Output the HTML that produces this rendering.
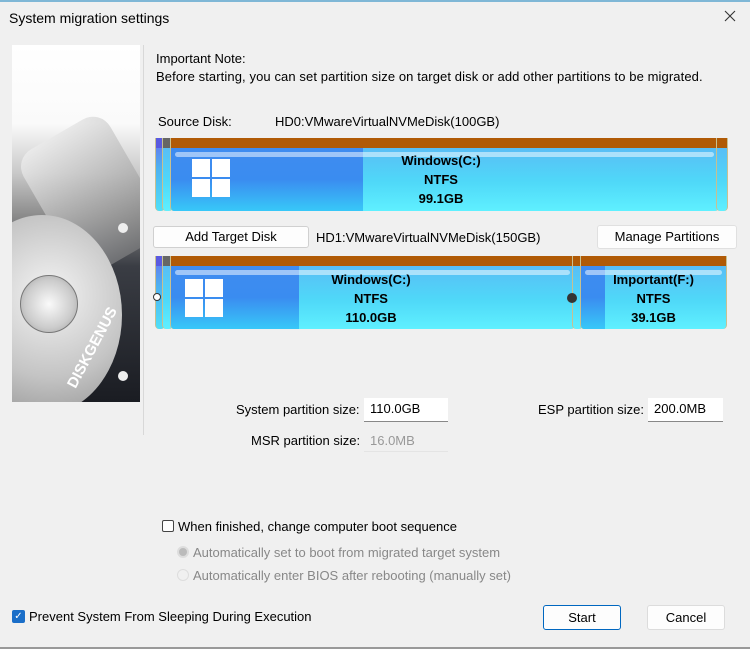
<!DOCTYPE html>
<html><head><style>
body{margin:0;width:750px;height:649px;background:#f0f0f0;font-family:"Liberation Sans",sans-serif;font-size:13px;color:#000;position:relative;overflow:hidden}
.a{position:absolute;white-space:nowrap}
.part{position:absolute;top:0;bottom:0;border-left:1px solid #c8c090;border-right:1px solid #c8c090;border-radius:0 0 4px 4px;overflow:hidden;background:linear-gradient(#5cb6f5,#4fd8f8 60%,#5ff0ff)}
.part .top{position:absolute;left:0;right:0;top:0;height:10px;background:#b05a06}
.part .dk{position:absolute;top:10px;bottom:0;left:0;background:linear-gradient(#3f8cf0,#3a8cf0 50%,#38c8f8)}
.part .hl{position:absolute;top:14px;left:4px;right:4px;height:5px;background:rgba(255,255,255,.5);border-radius:3px}
.lbl{position:absolute;font-weight:bold;text-align:center;line-height:19px;font-size:13px}
.btn{position:absolute;background:#fdfdfd;border:1px solid #d0d0d0;box-sizing:border-box;text-align:center;border-radius:3px}
.inp{position:absolute;background:#fff;border-bottom:1px solid #888;box-sizing:border-box;padding-left:6px;line-height:22px}
.win{position:absolute;width:38px;height:38px}
.win i{position:absolute;width:18px;height:18px;background:#fff}
</style></head><body>
<div class="a" style="left:0;top:0;width:750px;height:2px;background:#7fb7d6"></div>
<div class="a" style="left:9px;top:10px;font-size:14px">System migration settings</div>
<svg class="a" style="left:724px;top:10px" width="12" height="12"><path d="M1 1L11 11M11 1L1 11" stroke="#333" stroke-width="1.1"/></svg>

<div class="a" style="left:12px;top:45px;width:128px;height:357px;background:linear-gradient(#fff 0%,#fafafa 22%,#c8c8c8 36%,#8a8a8a 48%,#3a3d44 62%,#1a1c22 100%);overflow:hidden">
 <div class="a" style="left:30px;top:80px;width:100px;height:140px;background:linear-gradient(135deg,rgba(255,255,255,.5),rgba(120,120,120,.5));transform:rotate(-30deg);border-radius:20px"></div>
 <div class="a" style="left:-50px;top:170px;width:160px;height:200px;border-radius:50%;background:radial-gradient(circle at 55% 40%,#f4f4f4,#c4c4c4 55%,#8a8a8a)"></div>
 <div class="a" style="left:8px;top:230px;width:56px;height:56px;border-radius:50%;background:radial-gradient(#fafafa,#ccc 60%,#999);border:1px solid #777"></div>
 <div class="a" style="left:52px;top:338px;color:#fff;font-weight:bold;font-size:15px;transform:rotate(-62deg);transform-origin:left top">DISKGENUS</div>
 <div class="a" style="left:106px;top:178px;width:10px;height:10px;border-radius:50%;background:#eee"></div>
 <div class="a" style="left:106px;top:326px;width:10px;height:10px;border-radius:50%;background:#eee"></div>
</div>
<div class="a" style="left:143px;top:45px;width:1px;height:390px;background:#d8d8d8"></div>

<div class="a" style="left:156px;top:51px">Important Note:</div>
<div class="a" style="left:156px;top:69px;letter-spacing:0.1px">Before starting, you can set partition size on target disk or add other partitions to be migrated.</div>
<div class="a" style="left:158px;top:114px">Source Disk:</div>
<div class="a" style="left:275px;top:114px">HD0:VMwareVirtualNVMeDisk(100GB)</div>

<div class="a" style="left:155px;top:138px;width:571px;height:73px">
 <div class="part" style="left:0;width:8px;background:linear-gradient(#6a6ef0,#4fb0f0 40%,#50e0f8)"><div class="top" style="background:#5a5ae0"></div></div>
 <div class="part" style="left:7px;width:9px"><div class="top" style="background:#666"></div></div>
 <div class="part" style="left:15px;width:547px"><div class="dk" style="width:192px"></div><div class="top"></div><div class="hl"></div>
  <div class="win" style="left:21px;top:21px"><i style="left:0;top:0"></i><i style="left:20px;top:0"></i><i style="left:0;top:20px"></i><i style="left:20px;top:20px"></i></div>
  <div class="lbl" style="left:200px;width:140px;top:13px">Windows(C:)<br>NTFS<br>99.1GB</div></div>
 <div class="part" style="left:561px;width:10px"><div class="top"></div></div>
</div>

<div class="btn" style="left:153px;top:226px;width:156px;height:22px;line-height:20px">Add Target Disk</div>
<div class="a" style="left:316px;top:230px">HD1:VMwareVirtualNVMeDisk(150GB)</div>
<div class="btn" style="left:597px;top:225px;width:140px;height:24px;line-height:22px;border-color:#e0e0e0">Manage Partitions</div>

<div class="a" style="left:155px;top:256px;width:570px;height:73px">
 <div class="part" style="left:0;width:8px;background:linear-gradient(#6a6ef0,#4fb0f0 40%,#50e0f8)"><div class="top" style="background:#5a5ae0"></div></div>
 <div class="part" style="left:7px;width:9px"><div class="top" style="background:#666"></div></div>
 <div class="part" style="left:15px;width:403px"><div class="dk" style="width:128px"></div><div class="top"></div><div class="hl"></div>
  <div class="win" style="left:14px;top:23px"><i style="left:0;top:0"></i><i style="left:20px;top:0"></i><i style="left:0;top:20px"></i><i style="left:20px;top:20px"></i></div>
  <div class="lbl" style="left:130px;width:140px;top:14px">Windows(C:)<br>NTFS<br>110.0GB</div></div>
 <div class="part" style="left:417px;width:9px"><div class="top"></div></div>
 <div class="part" style="left:425px;width:145px"><div class="dk" style="width:24px"></div><div class="top"></div><div class="hl"></div>
  <div class="lbl" style="left:0;width:145px;top:14px">Important(F:)<br>NTFS<br>39.1GB</div></div>
 <div class="a" style="left:-2px;top:37px;width:8px;height:8px;border-radius:50%;background:#fff;border:1px solid #333;box-sizing:border-box"></div>
 <div class="a" style="left:412px;top:37px;width:10px;height:10px;border-radius:50%;background:#333"></div>
</div>

<div class="a" style="left:236px;top:402px">System partition size:</div>
<div class="inp" style="left:364px;top:398px;width:84px;height:24px">110.0GB</div>
<div class="a" style="left:538px;top:402px">ESP partition size:</div>
<div class="inp" style="left:648px;top:398px;width:75px;height:24px">200.0MB</div>
<div class="a" style="left:251px;top:433px">MSR partition size:</div>
<div class="a" style="left:370px;top:433px;color:#999">16.0MB</div>
<div class="a" style="left:364px;top:451px;width:84px;height:1px;background:#e4e4e4"></div>

<div class="a" style="left:162px;top:520px;width:12px;height:12px;border:1px solid #444;box-sizing:border-box;background:#fff;border-radius:2px"></div>
<div class="a" style="left:178px;top:519px">When finished, change computer boot sequence</div>
<div class="a" style="left:177px;top:546px;width:12px;height:12px;border-radius:50%;background:#bbb;border:2px solid #ddd;box-sizing:border-box"></div>
<div class="a" style="left:193px;top:545px;color:#888">Automatically set to boot from migrated target system</div>
<div class="a" style="left:177px;top:569px;width:12px;height:12px;border-radius:50%;background:#f0f0f0;border:1px solid #ddd;box-sizing:border-box"></div>
<div class="a" style="left:193px;top:568px;color:#888">Automatically enter BIOS after rebooting (manually set)</div>

<div class="a" style="left:12px;top:610px;width:13px;height:13px;background:#1a6ec8;border-radius:2px;color:#fff;font-size:10px;line-height:13px;text-align:center">✓</div>
<div class="a" style="left:29px;top:609px">Prevent System From Sleeping During Execution</div>
<div class="btn" style="left:543px;top:605px;width:78px;height:25px;line-height:23px;border-color:#0067c0">Start</div>
<div class="btn" style="left:647px;top:605px;width:78px;height:25px;line-height:23px;border-color:#dcdcdc">Cancel</div>
<div class="a" style="left:0;top:647px;width:750px;height:2px;background:#999"></div>
</body></html>
